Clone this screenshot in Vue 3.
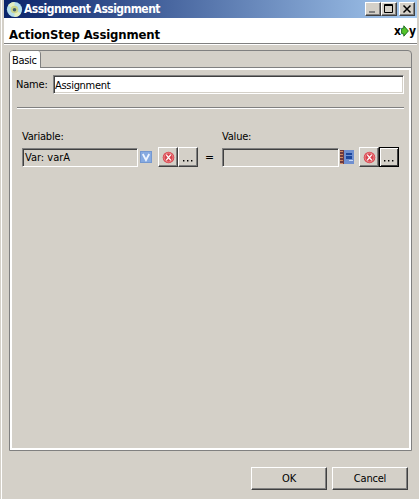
<script setup>
import { ref } from 'vue'
const name = ref('Assignment')
const fields = [
  { label: 'Variable:', text: 'Var: varA', kind: 'variable', focused: false },
  { label: 'Value:', text: '', kind: 'value', focused: true }
]
</script>

<template>
  <div class="window">
    <div class="titlebar">
      <svg class="disc" width="17" height="17" viewBox="0 0 17 17">
        <circle cx="8.5" cy="8.5" r="7.6" fill="#b5deea" />
        <path d="M8.5 8.5 2 4.5A7.6 7.6 0 0 1 8.5 .9Z M8.5 8.5 15 12.5A7.6 7.6 0 0 1 8.5 16.1Z" fill="#e4eec0" />
        <circle cx="8.5" cy="8.5" r="3.8" fill="#cbd58c" />
        <circle cx="8.5" cy="8.7" r="1.8" fill="#45606c" />
      </svg>
      <span class="title">Assignment Assignment</span>
      <div class="controls">
        <button class="ctl"><svg width="12" height="10"><path d="M2 7h6v2H2z" fill="#808080" /></svg></button>
        <button class="ctl"><svg width="12" height="10"><path d="M1.5 .5h8v8h-8zM1 1.5h9" fill="none" stroke="#000" /></svg></button>
        <button class="ctl close"><svg width="12" height="10"><path d="M2.5 1.5l7 7M9.5 1.5l-7 7" stroke="#000" stroke-width="1.5" /></svg></button>
      </div>
    </div>
    <div class="header">
      <h1>ActionStep Assignment</h1>
      <div class="logo">
        <span>x</span>
        <svg width="8" height="12" viewBox="0 0 8 12"><path d="M.6 3.5 2.8 3V.8L7.4 6 2.8 11.2V9L.6 8.5z" fill="#54c52b" stroke="#17651a" stroke-width=".9" /></svg>
        <span>y</span>
      </div>
    </div>
    <div class="tabs">
      <div class="strip"><div class="tab">Basic</div><div class="rest"></div></div>
      <div class="panel">
        <div class="name-row"><label>Name:</label><input v-model="name" /></div>
        <div class="rule"></div>
        <div class="assign">
          <template v-for="(f, i) in fields" :key="f.kind">
            <span v-if="i" class="equals">=</span>
            <div class="group" :class="f.kind">
              <div class="caption">{{ f.label }}</div>
              <div class="controls-row">
                <div class="field">{{ f.text }}</div>
                <svg v-if="f.kind === 'variable'" class="kind" width="14" height="14" viewBox="0 0 14 14">
                  <rect x="1.5" y="1.5" width="11" height="11" fill="#86aae1" stroke="#7498d1" />
                  <path d="M3.8 4 7 10 10.2 4" fill="none" stroke="#edf4ff" stroke-width="1.8" />
                </svg>
                <svg v-else class="kind" width="14" height="14" viewBox="0 0 14 14">
                  <path d="M0 0h4v14H0z" fill="#6e3940" />
                  <path d="M0 1.5h3M0 4.5h3M0 7.5h3M0 10.5h3M0 13.5h3" stroke="#d08a62" />
                  <path d="M4 0h10v14H4z" fill="#6f8fd0" />
                  <path d="M6 3h6v2H6zM6 6h6v3H6z" fill="#1c469c" />
                  <path d="M9 10.5h4" stroke="#c6d8f6" />
                </svg>
                <button class="small clear">
                  <svg width="13" height="13" viewBox="0 0 13 13">
                    <circle cx="6.5" cy="6.5" r="5.8" fill="#d8444e" />
                    <circle cx="6.5" cy="6.5" r="4.5" fill="none" stroke="#f4a4a4" stroke-width=".7" />
                    <path d="M4.2 3.6 8.8 9.4M8.8 3.6 4.2 9.4" stroke="#fff" stroke-width="1.3" />
                  </svg>
                </button>
                <button class="small" :class="{ focused: f.focused }"><svg width="12" height="12"><path d="M1 9h1.4v1.5H1zM5 9h1.4v1.5H5zM9 9h1.4v1.5H9z" /></svg></button>
              </div>
            </div>
          </template>
        </div>
      </div>
    </div>
    <div class="actions"><button>OK</button><button>Cancel</button></div>
  </div>
</template>

<style>
body { margin: 0; background: #d4d0c8; }
</style>
<style scoped>
* { box-sizing: border-box; }
.window { width: 419px; height: 499px; overflow: hidden; background: #d4d0c8; border-left: 1px solid #d4d0c8; padding: 0 2px 0 3px; box-shadow: inset 1px 0 #fff; font: 11px/14px "DejaVu Sans Condensed", "DejaVu Sans", sans-serif; font-stretch: condensed; color: #000; display: flex; flex-direction: column; }
button { font: inherit; color: inherit; background: #d4d0c8; border: 1px solid; border-color: #fff #404040 #404040 #fff; box-shadow: inset -1px -1px #808080; padding: 0; margin: 0; border-radius: 0; outline: none; display: flex; align-items: center; justify-content: center; }
.titlebar { height: 18px; flex: none; background: linear-gradient(90deg, #0a246a, #a6caf0); display: flex; align-items: center; padding: 0 2px; }
.disc { flex: none; }
.title { margin-left: 1px; color: #fff; font-weight: bold; font-size: 12px; letter-spacing: -.54px; white-space: nowrap; }
.controls { margin-left: auto; display: flex; }
.ctl { width: 16px; height: 14px; }
.close { margin-left: 2px; }
.header { height: 26px; flex: none; background: #fff; border-bottom: 1px solid #808080; box-shadow: 0 1px #fff; display: flex; align-items: center; justify-content: space-between; padding: 0 1px 0 5px; }
h1 { margin: 0; padding-top: 8px; font-size: 13px; line-height: 16px; letter-spacing: -.15px; white-space: nowrap; }
.logo { display: flex; align-items: center; font-weight: bold; font-size: 12px; line-height: 14px; }
.tabs { margin: 6px 5px 0; height: 401px; flex: none; border: 1px solid #808080; border-radius: 4px 4px 0 0; display: flex; flex-direction: column; }
.strip { height: 17px; display: flex; flex: none; }
.tab { width: 31px; background: #fff; border-right: 1px solid #808080; border-radius: 3px 3px 0 0; padding: 3px 0 0 2px; height: 17px; line-height: 13px; letter-spacing: -.3px; }
.rest { flex: 1; border-bottom: 1px solid #808080; }
.panel { flex: 1; border: 2px solid #fff; padding: 5px 5px 0 4px; }
.name-row { display: flex; align-items: center; }
.name-row label { width: 37px; letter-spacing: -.2px; padding-top: 1px; }
input { flex: 1; min-width: 0; height: 19px; padding: 1px 1px 0; font: inherit; letter-spacing: -.3px; background: #fff; border: 1px solid; border-color: #808080 #fff #fff #808080; box-shadow: inset 1px 1px #404040, inset -1px -1px #d4d0c8; border-radius: 0; outline: none; }
.rule { height: 2px; margin: 13px 0 0 1px; background: #808080; border-bottom: 1px solid #fff; }
.assign { display: flex; align-items: flex-end; padding: 20px 0 0 6px; }
.group { width: 177px; flex: none; }
.group.variable { width: 176px; }
.caption { height: 18px; padding-top: 1px; letter-spacing: -.2px; }
.controls-row { display: flex; align-items: center; height: 20px; }
.field { width: 117px; height: 19px; border: 1px solid; border-color: #808080 #fff #fff #808080; box-shadow: inset 1px 1px #404040; padding: 2px 2px 0; }
.variable .field { width: 116px; }
.kind { margin-left: 1px; }
.small { width: 20px; height: 20px; }
.clear { margin-left: 5px; }
.focused { border-color: #000; box-shadow: inset 1px 1px #fff, inset -1px -1px #404040; }
.equals { width: 24px; padding-right: 1px; text-align: center; line-height: 20px; font-size: 12px; }
.actions { display: flex; justify-content: flex-end; gap: 5px; padding: 16px 9px 0 0; }
.actions button { width: 76px; height: 23px; letter-spacing: -.2px; }
</style>
